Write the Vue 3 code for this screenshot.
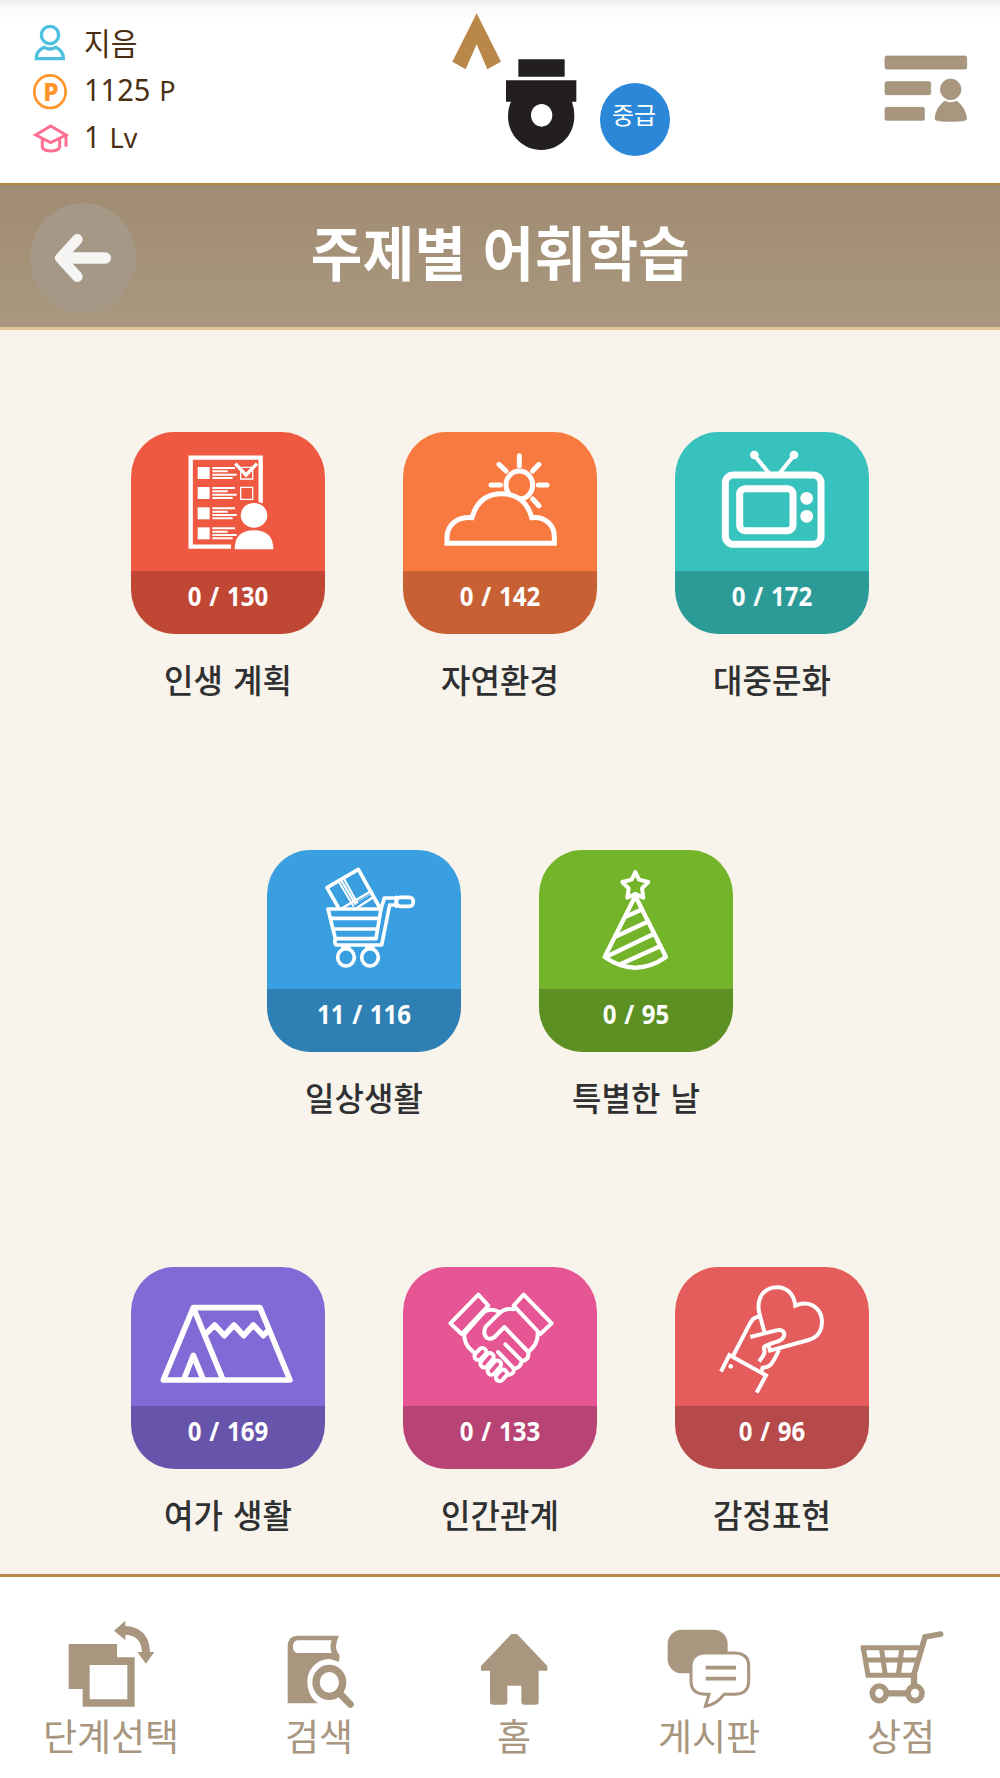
<!-- TopicVocabulary.vue -->
<template>
    <div class="page">
        <header class="top">
            <ul class="user">
                <li>
                    <svg viewBox="96 61 114 141" fill="none" stroke="#4bbfdf" stroke-width="10">
                        <circle cx="150" cy="106" r="26" />
                        <path d="M133 143 Q108 154 109 177 H190 Q190 154 167 143 Q150 153 133 143Z" />
                    </svg>
                    <span class="user-name">{{ user.name }}</span>
                </li>
                <li>
                    <svg viewBox="96 202 114 141">
                        <ellipse cx="150" cy="276" rx="47" ry="49" fill="none" stroke="#ff9528" stroke-width="8" />
                        <text class="coin" x="153" y="303" text-anchor="middle">P</text>
                    </svg>
                    <span class="num">{{ user.point }}</span><span class="unit">P</span>
                </li>
                <li>
                    <svg viewBox="96 343 114 141" fill="none" stroke="#ff6f91" stroke-width="9">
                        <path d="M107 406 L152 379 L198 406 L152 429Z" />
                        <path d="M127 418 V443 Q132 454 152 454 Q174 454 179 443 V418" />
                        <path d="M198 406 V441" />
                    </svg>
                    <span class="num">{{ user.level }}</span><span class="unit">Lv</span>
                </li>
            </ul>
            <div class="brand">
                <svg class="logo" viewBox="96 40 378 414">
                    <path fill="#b98848" d="M170 41 L243 186 L202 209 L170 134 L137 209 L97 186Z" />
                    <path fill="#231f20" d="M295 179 H434 V231 H295Z" />
                    <path fill="#231f20" fill-rule="evenodd"
                        d="M258 242 H469 V306 H456 Q463 325 463 350 C463 408 418 451 364 451 C310 451 264 408 264 350 Q264 325 273 306 H258Z M365 313 C347 313 333 328 333 347 C333 366 347 381 365 381 C383 381 397 366 397 347 C397 328 383 313 365 313Z" />
                </svg>
                <span class="grade">{{ user.grade }}</span>
            </div>
            <svg class="menu" viewBox="552 165 250 201" fill="#a8967f" stroke="#998770" stroke-width="2">
                <rect x="554" y="168" width="245" height="39" rx="5" />
                <rect x="554" y="245" width="137" height="39" rx="5" />
                <rect x="554" y="322" width="118" height="39" rx="5" />
                <circle cx="751" cy="268" r="31" />
                <path d="M732 304 Q751 312 770 304 Q796 325 799 357 Q797 364 751 364 Q705 364 704 357 Q706 325 732 304Z" />
            </svg>
        </header>

        <div class="title-bar">
            <button class="back">
                <svg viewBox="162 698 174 150" fill="none" stroke="#f6f5f4" stroke-linecap="round" stroke-linejoin="round">
                    <path stroke-width="32" d="M232 717 L181 773 L232 829" />
                    <path stroke-width="34" d="M200 773 H316" />
                </svg>
            </button>
            <h1>주제별 어휘학습</h1>
        </div>

        <main class="topics">
            <div v-for="(row, i) in rows" :key="i" class="topic-row">
                <div v-for="item in row" :key="item.icon" class="topic">
                    <div class="tile" :class="item.icon">
                        <svg :viewBox="item.box" fill="none" stroke="#fff" stroke-linecap="round" stroke-linejoin="round">
                            <!-- 계획표 -->
                            <g v-if="item.icon === 'plan'" stroke-linecap="butt" stroke-linejoin="miter">
                                <path stroke-width="13" d="M332 380 H211 V113 H421 V250" />
                                <g v-for="y in [141, 201, 262, 322]" :key="y">
                                    <rect :x="232" :y="y" width="36" height="36" fill="#fff" stroke="none" />
                                    <path stroke-width="6"
                                        :d="`M276 ${y + 3}h68 M276 ${y + 13}h46 M276 ${y + 23}h73 M276 ${y + 33}h61`" />
                                </g>
                                <path stroke-width="4" d="M361 142H397V177H361Z M361 202H397V238H361Z" />
                                <path stroke-width="10" d="M345 131 L377 165 L410 131" />
                                <ellipse cx="401" cy="286" rx="45" ry="42" fill="#ef5941" stroke="none" />
                                <ellipse cx="401" cy="286" rx="40" ry="37" fill="#fff" stroke="none" />
                                <path fill="#fff" stroke="none" d="M343 388 Q343 331 401 331 Q459 331 459 388Z" />
                            </g>
                            <!-- 구름과 해 -->
                            <g v-else-if="item.icon === 'nature'" stroke-width="15">
                                <ellipse cx="387" cy="195" rx="40" ry="42" />
                                <path d="M387 107V137 M446 133L427 153 M444 195H470 M427 237L446 257 M302 195H330 M326 133L347 153" />
                                <path fill="#f97a40" stroke-linecap="butt" stroke-linejoin="miter"
                                    d="M170 370 V350 C172 314 200 290 245 293 C258 247 288 221 334 221 C380 221 412 247 424 293 C466 288 492 317 492 350 V370Z" />
                            </g>
                            <!-- 텔레비전 -->
                            <g v-else-if="item.icon === 'media'" stroke-width="21">
                                <rect x="195" y="165" width="287" height="208" rx="24" />
                                <rect x="238" y="206" width="160" height="126" rx="16" />
                                <path stroke-width="12" d="M325 158 L283 107 M359 158 L400 107" />
                                <g fill="#fff" stroke="none">
                                    <circle cx="282" cy="105" r="13" />
                                    <circle cx="401" cy="105" r="13" />
                                    <circle cx="439" cy="235" r="19" />
                                    <circle cx="439" cy="289" r="19" />
                                </g>
                            </g>
                            <!-- 카트 -->
                            <g v-else-if="item.icon === 'daily'" stroke-width="11">
                                <path d="M234 200 L200 141 L294 86 L357 199" />
                                <path stroke-width="6" d="M234 121 L279 196 M250 113 L291 186" />
                                <path stroke-width="7" d="M242 118 L285 189 M246 202 L333 151 M290 201 L340 169" />
                                <path stroke-width="2" d="M285 187 L330 161" />
                                <path d="M203 205 H362 L347 294 H225Z M210 233 H356 M218 265 H351" />
                                <path d="M362 205 L372 172 H408 M406 193 H388 L364 313 H227 Q220 303 227 294" />
                                <path d="M248 318 H266 M320 318 H338" />
                                <rect x="408" y="170" width="51" height="27" rx="12" />
                                <path d="M408 170 V197" />
                                <ellipse cx="257" cy="350" rx="25" ry="26" />
                                <ellipse cx="329" cy="350" rx="25" ry="26" />
                            </g>
                            <!-- 고깔모자 -->
                            <g v-else-if="item.icon === 'party'" stroke-width="13">
                                <path stroke-width="12"
                                    d="M1125 94 L1136 117 L1164 124 L1145 143 L1149 171 L1125 159 L1101 171 L1105 143 L1086 124 L1114 117Z" />
                                <path d="M1125 166 L1033 349 Q1125 413 1217 349Z" />
                                <path d="M1094 229 L1143 207 M1068 287 L1162 243 M1036 349 L1180 280 M1080 371 L1196 318" />
                            </g>
                            <!-- 텐트 -->
                            <g v-else-if="item.icon === 'leisure'" stroke-width="17">
                                <path d="M129 360 L219 143 H419 L509 360Z M219 143 L307 357" />
                                <path d="M193 352 L219 286 L246 352" />
                                <path d="M257 221 L283 195 L312 227 L341 195 L370 227 L399 195 L429 227 L443 212" />
                            </g>
                            <!-- 악수 -->
                            <g v-else-if="item.icon === 'relation'" stroke-width="12">
                                <path d="M264 104 L180 190 L214 222 L294 137Z" />
                                <path d="M400 104 L484 190 L450 222 L370 137Z" />
                                <path d="M222 222 L282 155 Q303 142 329 157" />
                                <path d="M222 216 Q218 252 248 275" />
                                <path d="M370 148 Q343 144 326 161 L286 200 Q276 222 290 234 Q304 241 317 227 L342 201 L411 273" />
                                <path d="M442 219 Q444 252 414 276 Q417 300 394 304 Q391 325 370 326 Q374 342 352 345" />
                                <path d="M345 253 L394 302 M323 276 L370 325" />
                                <rect x="-10" y="-22" width="23" height="41" rx="11" transform="translate(268 282) rotate(43)" />
                                <rect x="-10" y="-26" width="23" height="49" rx="11" transform="translate(288 301) rotate(40)" />
                                <rect x="-10" y="-26" width="23" height="49" rx="11" transform="translate(310 323) rotate(41)" />
                                <rect x="-10" y="-19" width="23" height="38" rx="11" transform="translate(332 345) rotate(42)" />
                            </g>
                            <!-- 하트를 든 손 -->
                            <g v-else stroke-width="12" stroke-linecap="butt" stroke-linejoin="miter">
                                <path d="M312 215 L297 160 C288 122 303 91 337 83 C374 75 401 99 405 137 C443 120 474 139 483 169 C490 205 476 232 445 240 L329 272 L324 255" />
                                <path d="M299 170 C280 170 274 181 267 194 L218 288" />
                                <path d="M270 231 L348 211 C371 205 379 225 364 238 C350 249 338 245 314 259 Q308 262 313 274 Q312 286 296 304" />
                                <path d="M356 270 Q341 302 332 313 Q324 322 307 323 L303 337" />
                                <path d="M182 335 L207 285 L317 346 L289 398" />
                                <circle cx="211" cy="319" r="7" fill="#fff" stroke="none" />
                            </g>
                        </svg>
                        <div class="count"><span>{{ item.done }} / {{ item.total }}</span></div>
                    </div>
                    <div class="name">{{ item.name }}</div>
                </div>
            </div>
        </main>

        <nav class="tabs">
            <a class="tab">
                <svg viewBox="153 165 360 288" fill="#a8967f">
                    <path fill-rule="evenodd" d="M206 252 H351 V292 H404 V440 H248 V387 H206Z M269 315 V418 H382 V315Z" />
                    <path d="M342 212 L376 182 V198 C425 200 450 232 450 276 H463 L438 311 L412 276 H426 C425 244 410 226 376 224 V240Z" />
                </svg>
                <span>단계선택</span>
            </a>
            <a class="tab">
                <svg viewBox="777 165 360 288" fill="#a8967f">
                    <path fill-rule="evenodd"
                        d="M863 430 V258 Q864 228 892 227 H1017 Q998 262 1019 287 L1017 305 L990 297 C950 297 922 328 922 366 C922 398 938 420 955 430Z M892 241 Q879 244 879 260 Q879 276 892 279 H995 Q988 260 995 241Z" />
                    <ellipse cx="988" cy="367" rx="40" ry="42" fill="none" stroke="#a8967f" stroke-width="22" />
                    <path d="M1021 402 L1051 433" stroke="#a8967f" stroke-width="21" stroke-linecap="round" />
                </svg>
                <span>검색</span>
            </a>
            <a class="tab">
                <svg viewBox="-139 165 360 288" fill="#a8967f">
                    <path
                        d="M33 222 H50 L141 318 V332 H115 V426 Q115 434 106 434 H72 Q63 434 63 425 V377 H21 V425 Q21 434 12 434 H-22 Q-31 434 -31 426 V332 H-58 V318Z" />
                </svg>
                <span>홈</span>
            </a>
            <a class="tab">
                <svg viewBox="447 165 360 288" fill="#a8967f" stroke="#a8967f">
                    <rect x="503" y="209" width="180" height="131" rx="43" stroke="none" />
                    <path fill="#fff" stroke-width="9"
                        d="M613 279 H707 Q746 281 746 318 V366 Q744 401 707 403 H672 Q650 433 616 439 L627 403 H613 Q575 401 573 366 V318 Q575 281 613 279Z" />
                    <path stroke-width="11" d="M617 323 H708 M617 356 H708" />
                </svg>
                <span>게시판</span>
            </a>
            <a class="tab">
                <svg viewBox="1023 165 360 288" fill="none" stroke="#a8967f" stroke-width="15">
                    <path d="M1082 263 H1263 M1089 258 L1104 346 H1244 M1096 300 H1254 M1144 263 L1156 346 M1206 263 L1195 346" />
                    <path stroke-width="17" stroke-linecap="round" d="M1322 222 L1275 231 L1241 346" />
                    <path d="M1242 342 V375 M1160 400 H1222" stroke-width="19" />
                    <ellipse cx="1138" cy="400" rx="21" ry="22" stroke-width="17" />
                    <ellipse cx="1245" cy="400" rx="21" ry="22" stroke-width="17" />
                </svg>
                <span>상점</span>
            </a>
        </nav>
    </div>
</template>

<script setup>
import { reactive } from 'vue'

defineOptions({
    name: 'TopicVocabulary'
})

// 사용자 정보
const user = reactive({
    name: '지음',
    point: 1125,
    level: 1,
    grade: '중급'
})

// 주제 목록 (행 단위)
const rows = [
    [
        { icon: 'plan', name: '인생 계획', done: 0, total: 130, box: '32 36 582 417' },
        { icon: 'nature', name: '자연환경', done: 0, total: 142, box: '38 36 582 417' },
        { icon: 'media', name: '대중문화', done: 0, total: 172, box: '44 36 582 417' }
    ],
    [
        { icon: 'daily', name: '일상생활', done: 11, total: 116, box: '20 28 582 417' },
        { icon: 'party', name: '특별한 날', done: 0, total: 95, box: '836 28 582 417' }
    ],
    [
        { icon: 'leisure', name: '여가 생활', done: 0, total: 169, box: '32 21 582 417' },
        { icon: 'relation', name: '인간관계', done: 0, total: 133, box: '38 21 582 417' },
        { icon: 'emotion', name: '감정표현', done: 0, total: 96, box: '44 21 582 417' }
    ]
]
</script>

<style>
body {
    margin: 0;
    background: #f8f3eb;
}
</style>

<style scoped>
.page {
    display: flex;
    flex-direction: column;
    width: 1000px;
    height: 1778px;
    overflow: hidden;
    background: #f8f3eb;
    font-family: "Noto Sans", "Noto Sans CJK KR", sans-serif;
}

svg {
    display: block;
    flex: none;
}

.top {
    box-sizing: border-box;
    display: flex;
    flex: none;
    height: 185px;
    padding-right: 32px;
    border-bottom: 2px solid #b68241;
    background: linear-gradient(#eeeeee, #fafafa 8px, #fff 24px);
}

.user {
    width: 420px;
    margin: 0;
    padding: 20px 0 0 32px;
    list-style: none;
    color: #4a2f12;
}

.user li {
    display: flex;
    align-items: center;
    height: 47px;
}

.user svg {
    width: 38px;
    height: 47px;
    margin-right: 14px;
}

.user-name {
    font-family: "Noto Sans CJK KR", sans-serif;
    font-size: 29px;
    line-height: 47px;
    transform: translateY(-2px) scaleY(1.04);
}

.num {
    font-size: 29px;
    line-height: 47px;
    transform: translateY(-2px) scaleY(1.08);
}

.unit {
    margin-left: 9px;
    font-size: 27px;
    line-height: 47px;
}

.coin {
    font-family: "Noto Sans", sans-serif;
    font-size: 74px;
    font-weight: 800;
    fill: #ff9528;
}

.brand {
    display: flex;
    align-items: flex-start;
}

.logo {
    width: 126px;
    height: 138px;
    margin-top: 13px;
}

.grade {
    box-sizing: border-box;
    width: 70px;
    height: 73px;
    margin: 83px 0 0 22px;
    padding-right: 2px;
    border-radius: 50%;
    background: #2b87d8;
    color: #fff;
    font-family: "Noto Sans CJK KR", sans-serif;
    font-size: 24px;
    line-height: 62px;
    text-align: center;
}

.menu {
    width: 84px;
    height: 67px;
    margin: 55px 0 0 auto;
}

.title-bar {
    box-sizing: border-box;
    display: grid;
    flex: none;
    grid-template-columns: 106px 1fr 106px;
    align-items: start;
    height: 145px;
    padding: 18px 29px 0 30px;
    border-bottom: 3px solid #e2c599;
    background: linear-gradient(#a08c72, #a9977f);
}

.back {
    display: flex;
    align-items: center;
    justify-content: center;
    width: 106px;
    height: 110px;
    padding: 0;
    border: 0;
    border-radius: 50%;
    background: #a69887;
}

.back svg {
    width: 58px;
    height: 50px;
}

h1 {
    margin: 0;
    color: #fff;
    font-family: "Noto Sans CJK KR", sans-serif;
    font-size: 56px;
    font-weight: 700;
    letter-spacing: 0.4px;
    line-height: 96px;
    text-align: center;
    word-spacing: 3px;
    transform: scaleY(1.06);
}

.topics {
    box-sizing: border-box;
    flex: none;
    height: 1244px;
    padding-top: 102px;
}

.topic-row {
    display: flex;
    justify-content: center;
    gap: 78px;
    height: 417.5px;
}

.topic-row:last-child {
    height: auto;
}

.topic {
    width: 194px;
}

.tile {
    width: 194px;
    height: 202px;
    overflow: hidden;
    border-radius: 43px / 45px;
}

.tile svg {
    width: 194px;
    height: 139px;
}

.count {
    height: 63px;
    background: rgba(0, 0, 0, 0.2);
    color: #fff;
    font-size: 24px;
    font-weight: 700;
    line-height: 49px;
    text-align: center;
    word-spacing: 1.5px;
}

.count span {
    display: inline-block;
    transform: scaleY(1.1);
}

.plan { background: #ef5941; }
.nature { background: #f97a40; }
.media { background: #38c2bd; }
.daily { background: #3a9fe0; }
.party { background: #73b42b; }
.leisure { background: #8169d6; }
.relation { background: #e75694; }
.emotion { background: #e45c5c; }

.name {
    margin-top: 20px;
    color: #2e3032;
    font-family: "Noto Sans CJK KR", sans-serif;
    font-size: 32px;
    font-weight: 500;
    line-height: 48px;
    text-align: center;
    white-space: nowrap;
    word-spacing: 3px;
    transform: scaleY(1.04);
}

.tabs {
    box-sizing: border-box;
    display: grid;
    flex: none;
    grid-template-columns: 208px 208px 182px 208px 176px;
    height: 204px;
    padding: 38px 0 0 7px;
    border-top: 3px solid #b98947;
    background: #fff;
}

.tab {
    display: flex;
    flex-direction: column;
    align-items: center;
    color: #a8967f;
    font-family: "Noto Sans CJK KR", sans-serif;
    font-size: 37px;
    line-height: 48px;
}

.tab svg {
    width: 120px;
    height: 96px;
}
</style>
